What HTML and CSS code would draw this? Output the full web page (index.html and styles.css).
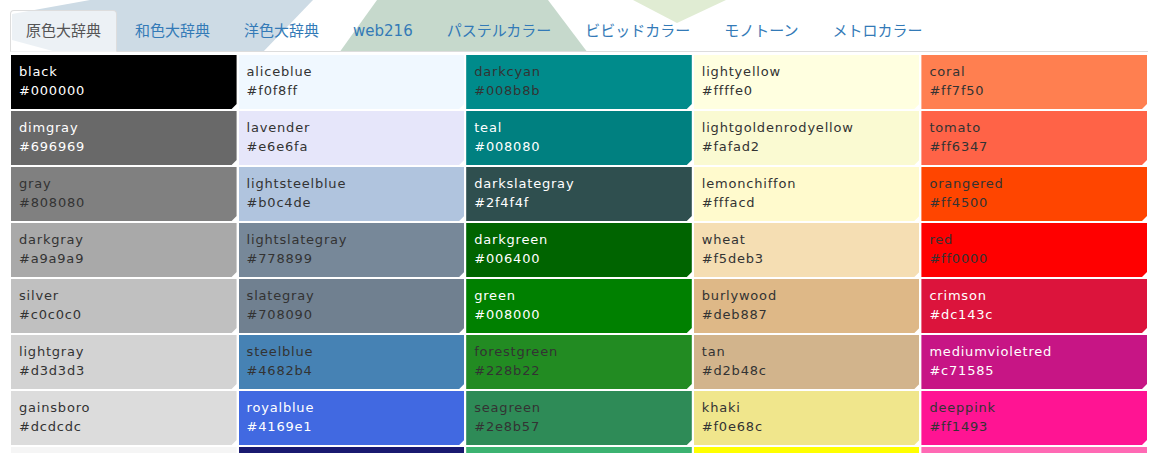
FILE: index.html
```html
<!DOCTYPE html>
<html lang="ja">
<head>
<meta charset="utf-8">
<title>原色大辞典</title>
<link rel="stylesheet" href="styles.css">
</head>
<body>
<header class="site-header">
  <ul class="nav-tabs">
    <li class="tab active"><a href="#">原色大辞典</a></li>
    <li class="tab"><a href="#">和色大辞典</a></li>
    <li class="tab"><a href="#">洋色大辞典</a></li>
    <li class="tab"><a href="#">web216</a></li>
    <li class="tab"><a href="#">パステルカラー</a></li>
    <li class="tab"><a href="#">ビビッドカラー</a></li>
    <li class="tab"><a href="#">モノトーン</a></li>
    <li class="tab"><a href="#">メトロカラー</a></li>
  </ul>
</header>
<main class="palette">
  <div class="swatch light" style="background:#000000"><span class="name">black</span><span class="hex">#000000</span></div>
  <div class="swatch" style="background:#f0f8ff"><span class="name">aliceblue</span><span class="hex">#f0f8ff</span></div>
  <div class="swatch" style="background:#008b8b"><span class="name">darkcyan</span><span class="hex">#008b8b</span></div>
  <div class="swatch" style="background:#ffffe0"><span class="name">lightyellow</span><span class="hex">#ffffe0</span></div>
  <div class="swatch" style="background:#ff7f50"><span class="name">coral</span><span class="hex">#ff7f50</span></div>

  <div class="swatch light" style="background:#696969"><span class="name">dimgray</span><span class="hex">#696969</span></div>
  <div class="swatch" style="background:#e6e6fa"><span class="name">lavender</span><span class="hex">#e6e6fa</span></div>
  <div class="swatch light" style="background:#008080"><span class="name">teal</span><span class="hex">#008080</span></div>
  <div class="swatch" style="background:#fafad2"><span class="name">lightgoldenrodyellow</span><span class="hex">#fafad2</span></div>
  <div class="swatch" style="background:#ff6347"><span class="name">tomato</span><span class="hex">#ff6347</span></div>

  <div class="swatch" style="background:#808080"><span class="name">gray</span><span class="hex">#808080</span></div>
  <div class="swatch" style="background:#b0c4de"><span class="name">lightsteelblue</span><span class="hex">#b0c4de</span></div>
  <div class="swatch light" style="background:#2f4f4f"><span class="name">darkslategray</span><span class="hex">#2f4f4f</span></div>
  <div class="swatch" style="background:#fffacd"><span class="name">lemonchiffon</span><span class="hex">#fffacd</span></div>
  <div class="swatch" style="background:#ff4500"><span class="name">orangered</span><span class="hex">#ff4500</span></div>

  <div class="swatch" style="background:#a9a9a9"><span class="name">darkgray</span><span class="hex">#a9a9a9</span></div>
  <div class="swatch" style="background:#778899"><span class="name">lightslategray</span><span class="hex">#778899</span></div>
  <div class="swatch light" style="background:#006400"><span class="name">darkgreen</span><span class="hex">#006400</span></div>
  <div class="swatch" style="background:#f5deb3"><span class="name">wheat</span><span class="hex">#f5deb3</span></div>
  <div class="swatch" style="background:#ff0000"><span class="name">red</span><span class="hex">#ff0000</span></div>

  <div class="swatch" style="background:#c0c0c0"><span class="name">silver</span><span class="hex">#c0c0c0</span></div>
  <div class="swatch" style="background:#708090"><span class="name">slategray</span><span class="hex">#708090</span></div>
  <div class="swatch light" style="background:#008000"><span class="name">green</span><span class="hex">#008000</span></div>
  <div class="swatch" style="background:#deb887"><span class="name">burlywood</span><span class="hex">#deb887</span></div>
  <div class="swatch light" style="background:#dc143c"><span class="name">crimson</span><span class="hex">#dc143c</span></div>

  <div class="swatch" style="background:#d3d3d3"><span class="name">lightgray</span><span class="hex">#d3d3d3</span></div>
  <div class="swatch" style="background:#4682b4"><span class="name">steelblue</span><span class="hex">#4682b4</span></div>
  <div class="swatch" style="background:#228b22"><span class="name">forestgreen</span><span class="hex">#228b22</span></div>
  <div class="swatch" style="background:#d2b48c"><span class="name">tan</span><span class="hex">#d2b48c</span></div>
  <div class="swatch light" style="background:#c71585"><span class="name">mediumvioletred</span><span class="hex">#c71585</span></div>

  <div class="swatch" style="background:#dcdcdc"><span class="name">gainsboro</span><span class="hex">#dcdcdc</span></div>
  <div class="swatch light" style="background:#4169e1"><span class="name">royalblue</span><span class="hex">#4169e1</span></div>
  <div class="swatch" style="background:#2e8b57"><span class="name">seagreen</span><span class="hex">#2e8b57</span></div>
  <div class="swatch" style="background:#f0e68c"><span class="name">khaki</span><span class="hex">#f0e68c</span></div>
  <div class="swatch" style="background:#ff1493"><span class="name">deeppink</span><span class="hex">#ff1493</span></div>

  <div class="swatch" style="background:#f5f5f5"><span class="name">whitesmoke</span><span class="hex">#f5f5f5</span></div>
  <div class="swatch light" style="background:#191970"><span class="name">midnightblue</span><span class="hex">#191970</span></div>
  <div class="swatch" style="background:#3cb371"><span class="name">mediumseagreen</span><span class="hex">#3cb371</span></div>
  <div class="swatch" style="background:#ffff00"><span class="name">yellow</span><span class="hex">#ffff00</span></div>
  <div class="swatch" style="background:#ff69b4"><span class="name">hotpink</span><span class="hex">#ff69b4</span></div>
</main>
</body>
</html>
```

FILE: styles.css
```css
html, body {
  margin: 0;
  padding: 0;
  background: #fff;
  font-family: "DejaVu Sans", "Noto Sans CJK JP", sans-serif;
}

.site-header {
  padding: 10px 7px 0 10px;
  background-color: #fff;
  background-image: url("data:image/svg+xml,%3Csvg xmlns='http://www.w3.org/2000/svg' width='1155' height='53'%3E%3Cpolygon points='90,0 313,0 262,53 60,53 12,40 12,14' fill='%23cddbe5'/%3E%3Cpolygon points='377,0 548,0 588,53 339,53' fill='%23c6d9cc'/%3E%3Cpolygon points='633,0 726,0 677,23' fill='%23e0ecd3'/%3E%3C/svg%3E");
  background-repeat: no-repeat;
  background-position: 0 0;
}

.nav-tabs {
  display: flex;
  list-style: none;
  margin: 0;
  padding: 0;
  border-bottom: 1px solid #ddd;
}

.tab {
  margin-right: 2px;
  margin-bottom: -1px;
}

.tab a {
  display: block;
  padding: 10px 15px;
  line-height: 20px;
  font-size: 15px;
  color: #337ab7;
  text-decoration: none;
  border: 1px solid transparent;
  border-radius: 4px 4px 0 0;
}

.tab.active a {
  color: #555;
  background: rgba(255, 255, 255, 0.62);
  border-color: #ddd #ddd transparent;
}

.palette {
  display: grid;
  grid-template-columns: repeat(5, 1fr);
  gap: 2px;
  padding: 3px 8px 0 11px;
}

.swatch {
  height: 54px;
  box-sizing: border-box;
  padding: 7px 8px 0;
  font-size: 13px;
  line-height: 19px;
  letter-spacing: 0.8px;
  color: #333;
  clip-path: polygon(0 0, 100% 0, 100% calc(100% - 5px), calc(100% - 5px) 100%, 0 100%);
}

.swatch.light {
  color: #fff;
}

.name,
.hex {
  display: block;
  white-space: nowrap;
}
```
